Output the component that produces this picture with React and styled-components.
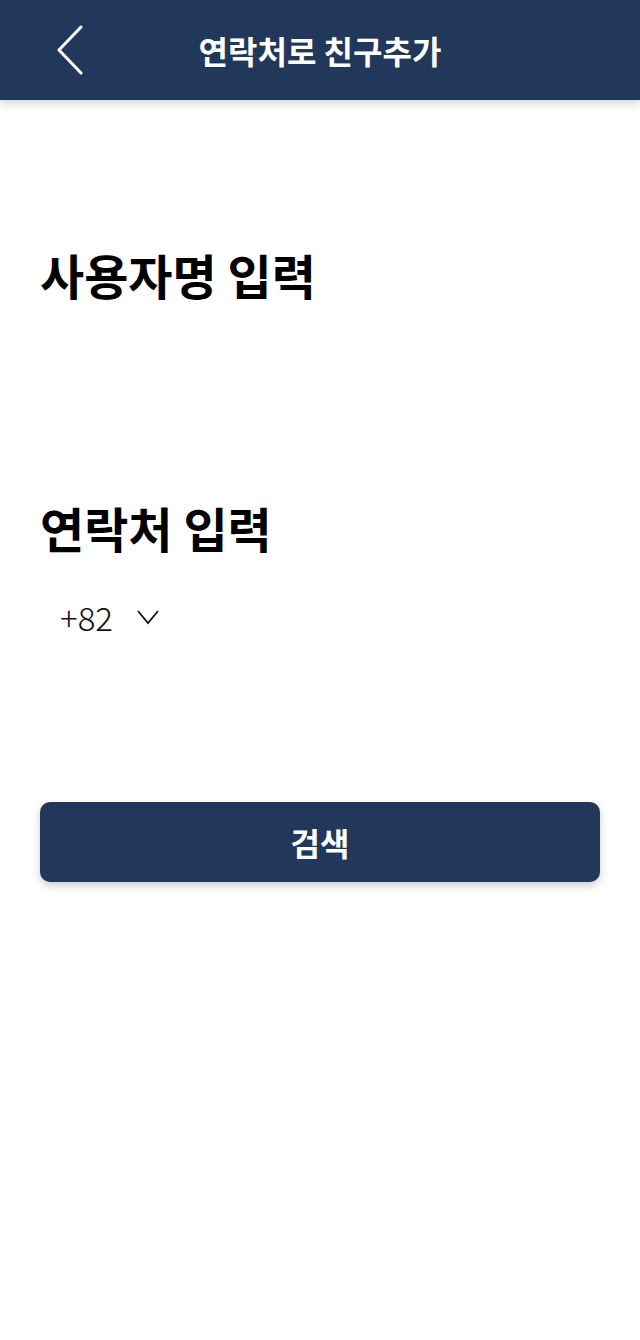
import React from "react";
import styled, { createGlobalStyle } from "styled-components";

const GlobalStyle = createGlobalStyle`
  html, body {
    margin: 0;
    padding: 0;
    background: #ffffff;
    font-family: "Noto Sans CJK KR", "Noto Sans", sans-serif;
  }
`;

const Page = styled.div`
  width: 640px;
  min-height: 1340px;
  background: #ffffff;
`;

const Header = styled.header`
  height: 100px;
  background-color: #21385a;
  box-shadow: 0 4px 8px rgba(0, 0, 0, 0.15);
  position: relative;
  display: flex;
  align-items: center;
  justify-content: center;
`;

const BackButton = styled.button`
  position: absolute;
  left: 50px;
  top: 24px;
  width: 40px;
  height: 52px;
  padding: 0;
  border: none;
  background: none;
  display: flex;
  align-items: center;
  justify-content: center;
`;

const Title = styled.h1`
  margin: 0;
  color: #ffffff;
  font-size: 32px;
  font-weight: 700;
`;

const Content = styled.main`
  padding: 0 40px;
  display: flex;
  flex-direction: column;
`;

const Section = styled.section`
  margin-top: ${(p) => p.top}px;
`;

const Label = styled.h2`
  margin: 0;
  font-size: 48px;
  font-weight: 700;
  color: #000000;
  line-height: 1.25;
`;

const CountryPicker = styled.div`
  margin-top: 36px;
  padding-left: 20px;
  display: flex;
  align-items: center;
  gap: 24px;
  font-family: "Noto Sans CJK KR", "Noto Sans", sans-serif;
  font-size: 33px;
  font-weight: 300;
  color: #111111;
`;

const SearchButton = styled.button`
  margin-top: 161px;
  height: 80px;
  width: 100%;
  border: none;
  border-radius: 10px;
  background-color: #21385a;
  box-shadow: 0 4px 8px rgba(0, 0, 0, 0.2);
  color: #ffffff;
  font-family: inherit;
  font-size: 32px;
  font-weight: 700;
`;

function App() {
  return (
    <>
      <GlobalStyle />
      <Page>
        <Header>
          <BackButton>
            <svg width="30" height="50" viewBox="0 0 30 50">
              <path
                d="M26 2 L4 25 L26 48"
                fill="none"
                stroke="#ffffff"
                strokeWidth="3"
                strokeLinecap="round"
                strokeLinejoin="round"
              />
            </svg>
          </BackButton>
          <Title>연락처로 친구추가</Title>
        </Header>
        <Content>
          <Section top={144}>
            <Label>사용자명 입력</Label>
          </Section>
          <Section top={193}>
            <Label>연락처 입력</Label>
            <CountryPicker>
              <span>+82</span>
              <svg width="22" height="16" viewBox="0 0 22 16">
                <path d="M1 2 L11 14 L21 2" fill="none" stroke="#111" strokeWidth="1.8" />
              </svg>
            </CountryPicker>
          </Section>
          <SearchButton>검색</SearchButton>
        </Content>
      </Page>
    </>
  );
}

export default App;
